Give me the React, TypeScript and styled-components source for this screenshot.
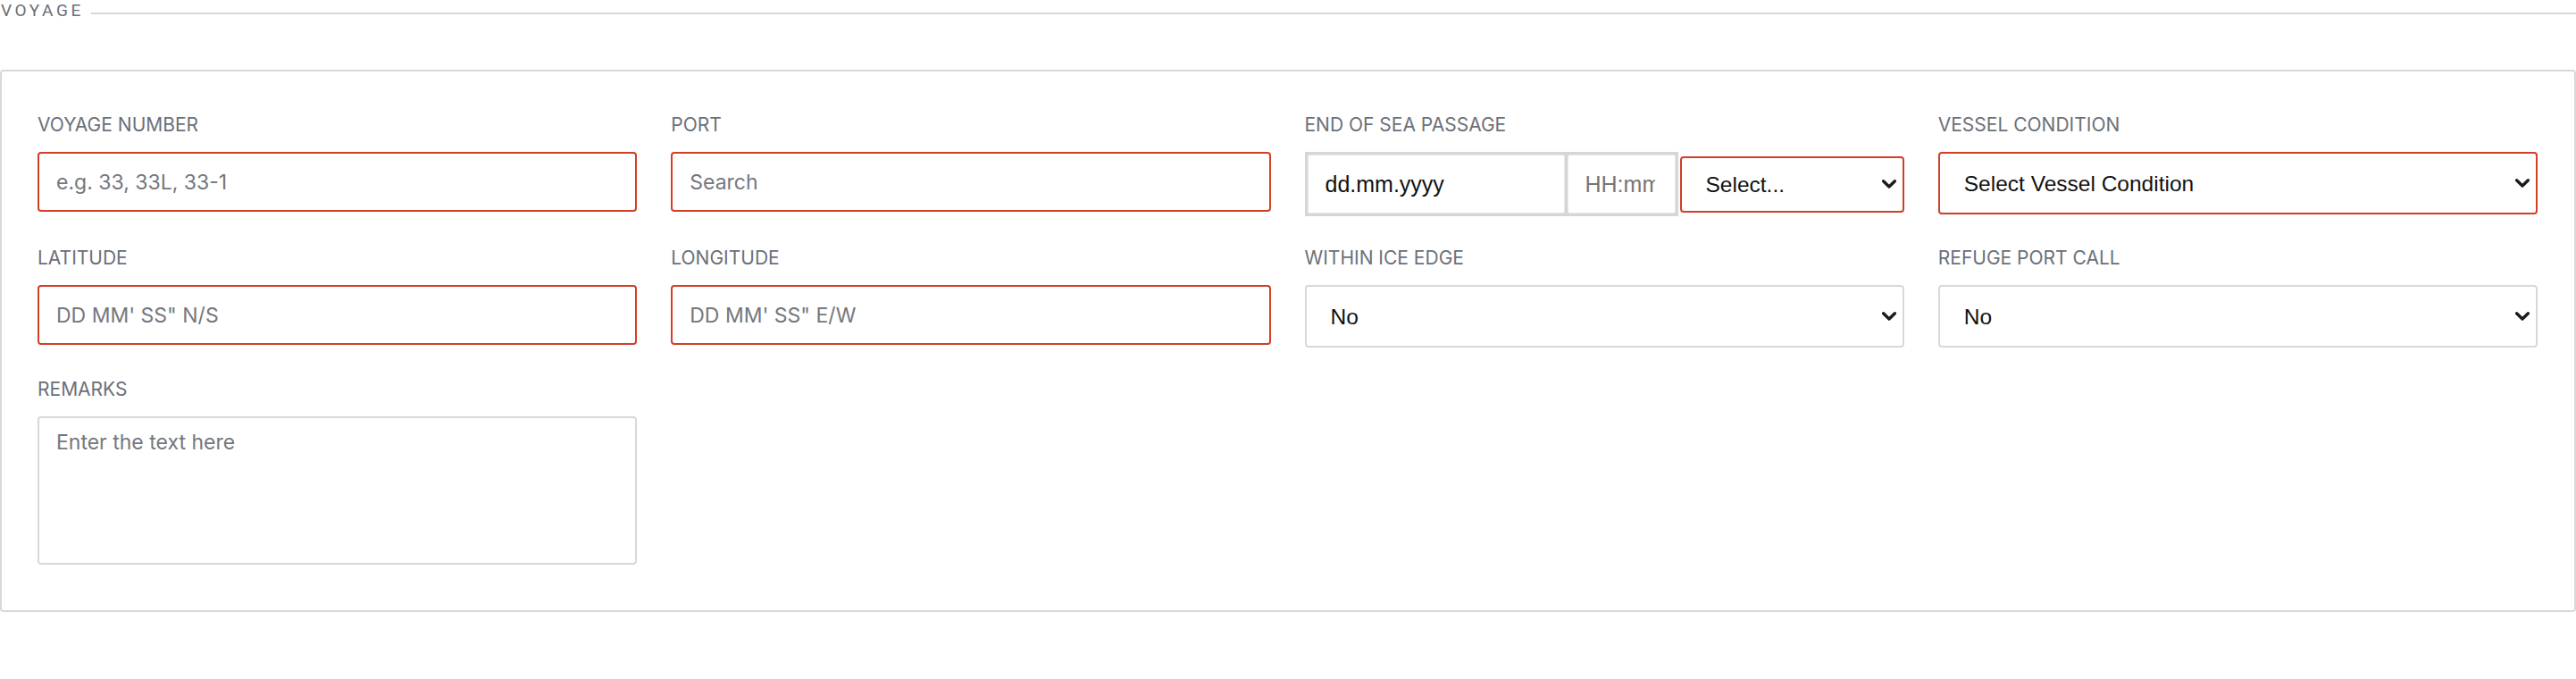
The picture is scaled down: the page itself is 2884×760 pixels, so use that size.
import React from "react";
import styled, { createGlobalStyle } from "styled-components";

const GlobalStyle = createGlobalStyle`
  html, body {
    margin: 0;
    padding: 0;
    background: #ffffff;
  }
  body {
    font-family: Inter, "Noto Sans", sans-serif;
    -webkit-font-smoothing: antialiased;
  }
  * { box-sizing: border-box; }
`;

const RED = "#cf4025";
const GRAY = "#d6d8db";

const Page = styled.div`
  width: 2884px;
  padding-top: 1px;
`;

const SectionHeader = styled.div`
  display: flex;
  align-items: flex-start;
  height: 22px;
`;

const SectionTitle = styled.span`
  font-family: Roboto, "Liberation Sans", sans-serif;
  font-size: 19px;
  line-height: 22px;
  letter-spacing: 3.6px;
  color: #6b6e75;
  padding-left: 1px;
`;

const SectionRule = styled.div`
  flex: 1;
  height: 2px;
  margin-top: 13px;
  margin-left: 8px;
  background: ${GRAY};
`;

const Panel = styled.section`
  margin-top: 55px;
  border: 2px solid ${GRAY};
  border-radius: 4px;
  padding: 48px 41px 51px 40px;
`;

const Grid = styled.div`
  display: grid;
  grid-template-columns: repeat(4, minmax(0, 1fr));
  column-gap: 38px;
  row-gap: 35px;
  align-items: start;
`;

const Field = styled.div`
  display: flex;
  flex-direction: column;
  min-width: 0;
`;

const Label = styled.label`
  font-family: Inter, sans-serif;
  font-size: 21px;
  line-height: 24px;
  color: #6b7079;
  text-transform: uppercase;
  margin-bottom: 18px;
  white-space: nowrap;
`;

const TextInput = styled.input<{ $invalid?: boolean }>`
  width: 100%;
  height: 67px;
  border: 2px solid ${(p) => (p.$invalid ? RED : GRAY)};
  border-radius: 4px;
  padding: 0 19px;
  font-family: Inter, sans-serif;
  font-size: 23px;
  color: #222;
  background: #fff;
  outline: none;
  &::placeholder {
    color: #74777d;
    opacity: 1;
  }
`;

const TextArea = styled.textarea`
  width: 100%;
  height: 166px;
  border: 2px solid ${GRAY};
  border-radius: 4px;
  padding: 11px 19px;
  font-family: Inter, sans-serif;
  font-size: 23px;
  line-height: 1.4;
  color: #222;
  resize: none;
  outline: none;
  &::placeholder {
    color: #74777d;
    opacity: 1;
  }
`;

const SelectWrap = styled.div<{ $height?: number }>`
  position: relative;
  flex: 1 1 auto;
  width: 100%;
  min-width: 0;
  height: ${(p) => p.$height ?? 70}px;
`;

const Select = styled.select<{ $invalid?: boolean }>`
  appearance: none;
  -webkit-appearance: none;
  display: block;
  width: 100%;
  height: 100%;
  border: 2px solid ${(p) => (p.$invalid ? RED : GRAY)};
  border-radius: 4px;
  padding: 0 40px 0 27px;
  font-family: "Liberation Sans", Arial, sans-serif;
  font-size: 24.5px;
  color: #111;
  background: #fff;
  outline: none;
`;

const Chevron = styled.svg`
  position: absolute;
  right: 8px;
  top: 50%;
  transform: translateY(-50%);
  pointer-events: none;
`;

const PassageRow = styled.div`
  display: flex;
  align-items: center;
  gap: 2px;
  width: 100%;
`;

const DateBox = styled.div`
  flex: 0 0 418px;
  width: 418px;
  min-width: 0;
  height: 72px;
  display: flex;
  gap: 3px;
  padding: 3px;
  background: #d4d6d9;
`;

const DatePart = styled.input<{ $width?: number }>`
  flex: ${(p) => (p.$width ? `0 0 ${p.$width}px` : "1 1 0")};
  width: ${(p) => (p.$width ? `${p.$width}px` : "0")};
  min-width: 0;
  height: 100%;
  border: 1px solid #e6e7e9;
  border-radius: 2px;
  padding: 0 22px 0 19px;
  font-family: "Liberation Sans", Arial, sans-serif;
  font-size: 25px;
  color: #111;
  background: #fff;
  outline: none;
  &::placeholder {
    color: #777;
    opacity: 1;
  }
`;

const ChevronIcon = () => (
  <Chevron width="18" height="12" viewBox="0 0 18 12" aria-hidden>
    <path
      d="M2.6 2.8 L9 9 L15.4 2.8"
      fill="none"
      stroke="#1b1b1b"
      strokeWidth="3.4"
      strokeLinecap="round"
      strokeLinejoin="round"
    />
  </Chevron>
);

type SelectFieldProps = {
  value: string;
  options: string[];
  invalid?: boolean;
  height?: number;
};

const SelectField = ({ value, options, invalid, height }: SelectFieldProps) => (
  <SelectWrap $height={height}>
    <Select $invalid={invalid} defaultValue={value}>
      {options.map((o) => (
        <option key={o} value={o}>
          {o}
        </option>
      ))}
    </Select>
    <ChevronIcon />
  </SelectWrap>
);

export default function App() {
  return (
    <>
      <GlobalStyle />
      <Page>
        <SectionHeader>
          <SectionTitle>VOYAGE</SectionTitle>
          <SectionRule />
        </SectionHeader>
        <Panel>
          <Grid>
            <Field>
              <Label>Voyage Number</Label>
              <TextInput $invalid placeholder="e.g. 33, 33L, 33-1" />
            </Field>
            <Field>
              <Label>Port</Label>
              <TextInput $invalid placeholder="Search" />
            </Field>
            <Field>
              <Label>End of Sea Passage</Label>
              <PassageRow>
                <DateBox>
                  <DatePart $width={288} defaultValue="dd.mm.yyyy" readOnly />
                  <DatePart placeholder="HH:mm" />
                </DateBox>
                <SelectField
                  value="Select..."
                  options={["Select...", "UTC", "Local"]}
                  invalid
                  height={63}
                />
              </PassageRow>
            </Field>
            <Field>
              <Label>Vessel Condition</Label>
              <SelectField
                value="Select Vessel Condition"
                options={["Select Vessel Condition", "Laden", "Ballast"]}
                invalid
              />
            </Field>

            <Field>
              <Label>Latitude</Label>
              <TextInput $invalid placeholder={`DD MM' SS" N/S`} />
            </Field>
            <Field>
              <Label>Longitude</Label>
              <TextInput $invalid placeholder={`DD MM' SS" E/W`} />
            </Field>
            <Field>
              <Label>Within Ice Edge</Label>
              <SelectField value="No" options={["No", "Yes"]} />
            </Field>
            <Field>
              <Label>Refuge Port Call</Label>
              <SelectField value="No" options={["No", "Yes"]} />
            </Field>

            <Field>
              <Label>Remarks</Label>
              <TextArea placeholder="Enter the text here" />
            </Field>
          </Grid>
        </Panel>
      </Page>
    </>
  );
}
